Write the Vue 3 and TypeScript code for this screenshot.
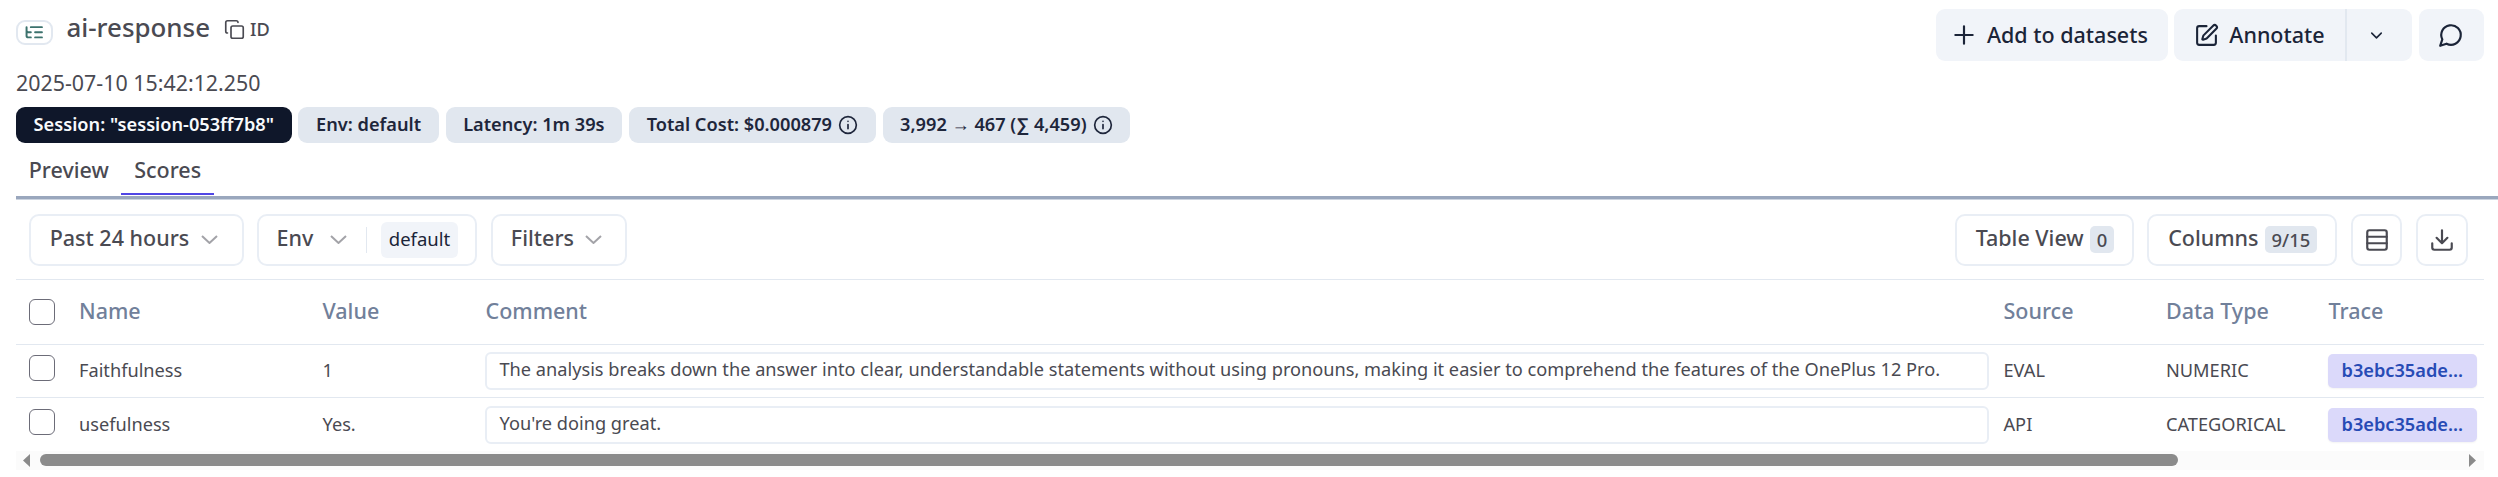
<script setup lang="ts">
interface ScoreRow {
  name: string
  value: string
  comment: string
  source: string
  dataType: string
  trace: string
}

interface Chip {
  label: string
  dark?: boolean
  info?: boolean
}

const chips: Chip[] = [
  { label: 'Session: "session-053ff7b8"', dark: true },
  { label: 'Env: default' },
  { label: 'Latency: 1m 39s' },
  { label: 'Total Cost: $0.000879', info: true },
  { label: '3,992 → 467 (∑ 4,459)', info: true },
]

const columns: string[] = ['Name', 'Value', 'Comment', 'Source', 'Data Type', 'Trace']

const rows: ScoreRow[] = [
  {
    name: 'Faithfulness',
    value: '1',
    comment:
      'The analysis breaks down the answer into clear, understandable statements without using pronouns, making it easier to comprehend the features of the OnePlus 12 Pro.',
    source: 'EVAL',
    dataType: 'NUMERIC',
    trace: 'b3ebc35ade...',
  },
  {
    name: 'usefulness',
    value: 'Yes.',
    comment: "You're doing great.",
    source: 'API',
    dataType: 'CATEGORICAL',
    trace: 'b3ebc35ade...',
  },
]
</script>

<template>
  <main class="page">
    <header class="head">
      <div class="title-row">
        <span class="type-box">
          <svg class="icon" width="20.5" height="20.5" viewBox="0 0 24 24">
            <path d="M21 12h-8M21 6H8M21 18h-8M3 6v4c0 1.1.9 2 2 2h3M3 10v6c0 1.1.9 2 2 2h3" />
          </svg>
        </span>
        <h1 class="title">ai-response</h1>
        <span class="copy">
          <svg class="icon thin" width="21" height="21" viewBox="0 0 24 24">
            <rect x="8" y="8" width="14" height="14" rx="2" />
            <path d="M4 16c-1.1 0-2-.9-2-2V4c0-1.1.9-2 2-2h10c1.1 0 2 .9 2 2" />
          </svg>
          <span>ID</span>
        </span>
      </div>
      <div class="actions">
        <button class="action add">
          <svg class="icon" width="26" height="26" viewBox="0 0 24 24"><path d="M4 12h16M12 4v16" /></svg>
          <span>Add to datasets</span>
        </button>
        <div class="split">
          <button class="action annotate">
            <svg class="icon" width="25" height="25" viewBox="0 0 24 24">
              <path d="M12 3H5a2 2 0 0 0-2 2v14a2 2 0 0 0 2 2h14a2 2 0 0 0 2-2v-7" />
              <path d="M18.375 2.625a1 1 0 0 1 3 3l-9.013 9.014a2 2 0 0 1-.853.505l-2.873.84a.5.5 0 0 1-.62-.62l.84-2.873a2 2 0 0 1 .506-.852z" />
            </svg>
            <span>Annotate</span>
          </button>
          <button class="action more">
            <svg class="icon" width="19" height="19" viewBox="0 0 24 24"><path d="m6 9 6 6 6-6" /></svg>
          </button>
        </div>
        <button class="action comment-btn">
          <svg class="icon" width="26" height="26" viewBox="0 0 24 24">
            <path d="M7.9 20A9 9 0 1 0 4 16.1L2 22Z" />
          </svg>
        </button>
      </div>
    </header>

    <div class="date">2025-07-10 15:42:12.250</div>

    <div class="chips">
      <span v-for="c in chips" :key="c.label" class="chip" :class="{ dark: c.dark }">
        <span>{{ c.label }}</span>
        <svg v-if="c.info" class="icon info" width="20" height="20" viewBox="0 0 24 24">
          <circle cx="12" cy="12" r="10" />
          <path d="M12 16.5V11.5M12 7.6h.01" />
        </svg>
      </span>
    </div>

    <nav class="tabs">
      <a class="tab">Preview</a>
      <a class="tab active">Scores</a>
    </nav>

    <div class="toolbar">
      <button class="tool past">
        <span>Past 24 hours</span>
        <svg class="chev" width="17" height="9" viewBox="0 0 17 9"><path d="M1 1l7.5 7L16 1" /></svg>
      </button>
      <button class="tool env">
        <span>Env</span>
        <svg class="chev" width="17" height="9" viewBox="0 0 17 9"><path d="M1 1l7.5 7L16 1" /></svg>
        <i class="sep"></i>
        <span class="env-tag">default</span>
      </button>
      <button class="tool filters">
        <span>Filters</span>
        <svg class="chev" width="17" height="9" viewBox="0 0 17 9"><path d="M1 1l7.5 7L16 1" /></svg>
      </button>
      <span class="grow"></span>
      <button class="tool view">
        <span>Table View</span>
        <span class="count">0</span>
      </button>
      <button class="tool cols">
        <span>Columns</span>
        <span class="count">9/15</span>
      </button>
      <button class="tool square">
        <svg class="icon" width="26" height="26" viewBox="0 0 24 24">
          <rect x="3" y="3" width="18" height="18" rx="2" />
          <path d="M21 9H3M21 15H3" />
        </svg>
      </button>
      <button class="tool square">
        <svg class="icon" width="26" height="26" viewBox="0 0 24 24">
          <path d="M21 15v4a2 2 0 0 1-2 2H5a2 2 0 0 1-2-2v-4M7 10l5 5 5-5M12 15V3" />
        </svg>
      </button>
    </div>

    <section class="table">
      <div class="row thead">
        <span class="check"></span>
        <span v-for="c in columns" :key="c" class="th">{{ c }}</span>
      </div>
      <div v-for="r in rows" :key="r.name" class="row">
        <span class="check"></span>
        <span class="cell">{{ r.name }}</span>
        <span class="cell">{{ r.value }}</span>
        <span class="comment">{{ r.comment }}</span>
        <span class="cell">{{ r.source }}</span>
        <span class="cell">{{ r.dataType }}</span>
        <span class="trace">{{ r.trace }}</span>
      </div>
      <div class="scroll">
        <svg width="7" height="13" viewBox="0 0 7 13"><path d="M7 0v13L0 6.5z" /></svg>
        <span class="track"><span class="thumb"></span></span>
        <svg width="7" height="13" viewBox="0 0 7 13"><path d="M0 0v13l7-6.5z" /></svg>
      </div>
    </section>
  </main>
</template>

<style>
body {
  margin: 0;
  background: #fff;
}
</style>

<style scoped>
* {
  box-sizing: border-box;
}
.page {
  width: 2498px;
  height: 477px;
  overflow: hidden;
  padding: 9.3px 0 0 16px;
  background: #fff;
  color: #4a4a52;
  font-family: 'Noto Sans', sans-serif;
  font-size: 18.2px;
  white-space: nowrap;
}
button {
  font: inherit;
  color: inherit;
  margin: 0;
  padding: 0;
  border: 0;
}
.icon {
  flex: none;
  display: block;
  fill: none;
  stroke: currentColor;
  stroke-width: 2;
  stroke-linecap: round;
  stroke-linejoin: round;
}
.icon.thin {
  stroke-width: 1.9;
}
.head {
  display: flex;
  justify-content: space-between;
  height: 56px;
  padding-right: 14.5px;
}
.title-row {
  display: flex;
  align-items: center;
  height: 36px;
}
.type-box {
  display: flex;
  align-items: center;
  justify-content: center;
  width: 37px;
  height: 25.5px;
  margin-top: 10px;
  border: 2px solid #e2e8f0;
  border-radius: 9px;
  color: #3c726d;
}
.type-box .icon {
  stroke-width: 2.3;
}
.title {
  margin: 0 0 0 13.5px;
  font-size: 25.9px;
  font-weight: 500;
  line-height: 36px;
}
.copy {
  display: flex;
  align-items: center;
  gap: 5.5px;
  margin: 4px 0 0 13.5px;
  font-size: 18.2px;
  font-weight: 500;
}
.actions {
  display: flex;
  gap: 6.7px;
}
.action {
  display: flex;
  align-items: center;
  height: 51.7px;
  border-radius: 9px;
  background: #f1f4f9;
  color: #1b2438;
  font-size: 21.5px;
  font-weight: 500;
}
.action span {
  margin-top: -1px;
}
.add {
  width: 231.7px;
  padding-left: 15.5px;
  gap: 9.5px;
}
.split {
  display: flex;
}
.annotate {
  width: 170.5px;
  padding-left: 20px;
  gap: 10px;
  border-radius: 9px 0 0 9px;
}
.more {
  width: 67.5px;
  padding-left: 20.5px;
  border-left: 2px solid #e2e8f0;
  border-radius: 0 9px 9px 0;
}
.comment-btn {
  width: 64.5px;
  justify-content: center;
}
.date {
  height: 34px;
  line-height: 35px;
  font-size: 21.4px;
}
.chips {
  display: flex;
  gap: 6.9px;
  margin-top: 7.5px;
}
.chip {
  display: flex;
  align-items: center;
  gap: 6px;
  height: 36.4px;
  padding: 0 17.6px 2.5px;
  border-radius: 9px;
  background: #e1e7ef;
  color: #1e263b;
  font-weight: 600;
}
.chip.dark {
  background: #0f172a;
  color: #f8fafc;
}
.info {
  margin-top: 2px;
}
.tabs {
  display: flex;
  height: 55.4px;
  border-bottom: 3px solid #9aa7bd;
  box-shadow: 0 1px 0 #ccd4e0;
}
.tab {
  height: 51.7px;
  padding: 0 12.7px;
  font-size: 21.5px;
  font-weight: 500;
  line-height: 54.5px;
}
.tab.active {
  border-bottom: 2px solid #5046e5;
}
.toolbar {
  display: flex;
  height: 81.5px;
  padding: 15.5px 16.4px 0 13px;
  margin-right: 14px;
  border-bottom: 1px solid #e2e8f0;
}
.grow {
  flex: 1;
}
.tool {
  display: flex;
  align-items: center;
  flex: none;
  height: 51.8px;
  padding: 0 0 4px 18.7px;
  border: 2px solid #e9eef5;
  border-radius: 10px;
  background: #fff;
  font-size: 21.5px;
  font-weight: 500;
}
.chev {
  margin-top: 4px;
  fill: none;
  stroke: #a3a3a8;
  stroke-width: 2;
}
.past {
  width: 214.7px;
}
.past .chev {
  margin-left: 12px;
}
.env {
  width: 220.5px;
  margin-left: 13.3px;
  padding-left: 17.5px;
}
.env .chev {
  margin-left: 17px;
}
.sep {
  width: 1.5px;
  height: 26px;
  margin: 4px 13.5px 0 18.5px;
  background: #e2e8f0;
}
.env-tag {
  height: 36px;
  margin-top: 4px;
  padding: 0 8px;
  border-radius: 6px;
  background: #f1f4f9;
  color: #1b2438;
  font-size: 18.5px;
  font-weight: 400;
  line-height: 34.5px;
}
.filters {
  width: 136px;
  margin-left: 13.7px;
  padding-left: 17.7px;
}
.filters .chev {
  margin-left: 11px;
}
.view {
  width: 179px;
}
.cols {
  width: 189.8px;
  margin-left: 13.5px;
}
.count {
  height: 27.7px;
  margin: 3px 0 0 6.8px;
  padding: 0 6.3px;
  border-radius: 5px;
  background: #e1e7ef;
  font-size: 18.4px;
  line-height: 28px;
}
.square {
  justify-content: center;
  width: 51.7px;
  margin-left: 13.5px;
  padding: 0;
}
.table {
  width: 2468px;
}
.row {
  display: grid;
  grid-template-columns: 50px 243.5px 163px 1518px 162.5px 162.5px 1fr;
  align-items: center;
  height: 53.3px;
  padding-left: 13px;
  border-bottom: 1px solid #e2e8f0;
}
.row:nth-child(3) {
  height: 53px;
  border-bottom: 0;
}
.row.thead {
  height: 64.8px;
}
.th {
  margin-top: -2px;
  color: #71809a;
  font-size: 21.5px;
  font-weight: 500;
}
.cell {
  margin-top: -1.5px;
}
.check {
  width: 26.3px;
  height: 26.3px;
  margin-top: -5.5px;
  border: 1px solid #6c6c78;
  border-radius: 6px;
}
.thead .check {
  margin-top: -0.5px;
}
.comment {
  width: 1504.5px;
  height: 38.3px;
  margin-left: -1px;
  padding-left: 13px;
  border: 2px solid #e9eef5;
  border-radius: 6px;
  line-height: 31.5px;
}
.trace {
  width: 149.5px;
  height: 34px;
  margin-left: -1px;
  padding-left: 14px;
  border-radius: 5px;
  background: #dbd9fa;
  color: #274bb5;
  font-weight: 600;
  line-height: 32px;
  box-shadow: 0 1px 2px #0000000d;
}
.scroll {
  display: flex;
  align-items: center;
  height: 18.4px;
  padding: 0 8.5px 0 6.5px;
  background: #fbfbfb;
}
.scroll svg {
  flex: none;
  fill: #8a8a8a;
}
.track {
  flex: 1;
  padding: 0 291px 0 10px;
}
.thumb {
  display: block;
  height: 12px;
  border-radius: 6px;
  background: #8b8b8b;
}
</style>
